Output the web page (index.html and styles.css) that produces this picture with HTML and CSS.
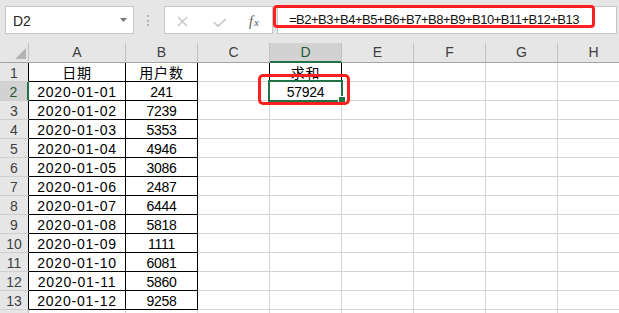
FILE: index.html
```html
<!DOCTYPE html>
<html lang="zh">
<head>
    <meta charset="UTF-8">
    <title>求和 - 工作表</title>
    <link rel="stylesheet" href="styles.css">
</head>
<body>

<!-- 名称框 + 编辑栏 -->
<div class="toolbar">
    <div class="namebox">
        <span>D2</span>
        <svg width="7" height="4" viewBox="0 0 7 4"><path d="M0 0h7L3.5 4z" fill="#767676"/></svg>
    </div>
    <div class="grip"><span></span><span></span><span></span></div>
    <div class="fxbox">
        <svg class="btn-x" width="11" height="11" viewBox="0 0 11 11"><path d="M1 1l9 9M10 1l-9 9" stroke="#c4c4c4" stroke-width="1.4" fill="none"/></svg>
        <svg class="btn-ok" width="14" height="9" viewBox="0 0 14 9"><path d="M1 4.5l4 3.5 8-7" stroke="#c4c4c4" stroke-width="1.6" fill="none"/></svg>
        <span class="fx"><i>f</i><i class="fx-x">x</i></span>
    </div>
    <div class="formula">=B2+B3+B4+B5+B6+B7+B8+B9+B10+B11+B12+B13</div>
</div>

<!-- 工作表 -->
<div class="sheet">
    <div class="hd corner"><svg width="11" height="11" viewBox="0 0 11 11"><path d="M11 0v11H0z" fill="#b5b5b5"/></svg></div>
    <div class="hd">A</div><div class="hd">B</div><div class="hd">C</div><div class="hd sel">D</div>
    <div class="hd">E</div><div class="hd">F</div><div class="hd">G</div><div class="hd">H</div>

    <div class="cell rh edge">1</div><div class="cell bk cjk">日期</div><div class="cell bk cjk">用户数</div><div class="cell bk-r"></div><div class="cell bk-r cjk">求和</div>
    <div class="cell"></div><div class="cell"></div><div class="cell"></div><div class="cell"></div>

    <div class="cell rh sel">2</div><div class="cell bk date">2020-01-01</div><div class="cell bk num">241</div><div class="cell"></div><div class="cell num active">57924</div>
    <div class="cell"></div><div class="cell"></div><div class="cell"></div><div class="cell"></div>

    <div class="cell rh edge">3</div><div class="cell bk date">2020-01-02</div><div class="cell bk num">7239</div><div class="cell"></div><div class="cell"></div>
    <div class="cell"></div><div class="cell"></div><div class="cell"></div><div class="cell"></div>

    <div class="cell rh edge">4</div><div class="cell bk date">2020-01-03</div><div class="cell bk num">5353</div><div class="cell"></div><div class="cell"></div>
    <div class="cell"></div><div class="cell"></div><div class="cell"></div><div class="cell"></div>

    <div class="cell rh edge">5</div><div class="cell bk date">2020-01-04</div><div class="cell bk num">4946</div><div class="cell"></div><div class="cell"></div>
    <div class="cell"></div><div class="cell"></div><div class="cell"></div><div class="cell"></div>

    <div class="cell rh edge">6</div><div class="cell bk date">2020-01-05</div><div class="cell bk num">3086</div><div class="cell"></div><div class="cell"></div>
    <div class="cell"></div><div class="cell"></div><div class="cell"></div><div class="cell"></div>

    <div class="cell rh edge">7</div><div class="cell bk date">2020-01-06</div><div class="cell bk num">2487</div><div class="cell"></div><div class="cell"></div>
    <div class="cell"></div><div class="cell"></div><div class="cell"></div><div class="cell"></div>

    <div class="cell rh edge">8</div><div class="cell bk date">2020-01-07</div><div class="cell bk num">6444</div><div class="cell"></div><div class="cell"></div>
    <div class="cell"></div><div class="cell"></div><div class="cell"></div><div class="cell"></div>

    <div class="cell rh edge">9</div><div class="cell bk date">2020-01-08</div><div class="cell bk num">5818</div><div class="cell"></div><div class="cell"></div>
    <div class="cell"></div><div class="cell"></div><div class="cell"></div><div class="cell"></div>

    <div class="cell rh edge">10</div><div class="cell bk date">2020-01-09</div><div class="cell bk num">1111</div><div class="cell"></div><div class="cell"></div>
    <div class="cell"></div><div class="cell"></div><div class="cell"></div><div class="cell"></div>

    <div class="cell rh edge">11</div><div class="cell bk date">2020-01-10</div><div class="cell bk num">6081</div><div class="cell"></div><div class="cell"></div>
    <div class="cell"></div><div class="cell"></div><div class="cell"></div><div class="cell"></div>

    <div class="cell rh edge">12</div><div class="cell bk date">2020-01-11</div><div class="cell bk num">5860</div><div class="cell"></div><div class="cell"></div>
    <div class="cell"></div><div class="cell"></div><div class="cell"></div><div class="cell"></div>

    <div class="cell rh edge">13</div><div class="cell bk date">2020-01-12</div><div class="cell bk num">9258</div><div class="cell"></div><div class="cell"></div>
    <div class="cell"></div><div class="cell"></div><div class="cell"></div><div class="cell"></div>

    <div class="cell rh"></div><div class="cell"></div><div class="cell"></div><div class="cell"></div><div class="cell"></div>
    <div class="cell"></div><div class="cell"></div><div class="cell"></div><div class="cell"></div>
</div>

<!-- 红色标注框 -->
<div class="mark mark-formula"></div>
<div class="mark mark-cell"></div>

</body>
</html>
```

FILE: styles.css
```css
/* 基础 */
* {
    margin: 0;
    padding: 0;
    box-sizing: border-box;
}

body {
    position: relative;
    width: 619px;
    height: 313px;
    overflow: hidden;
    background: #fff;
    font-family: "Liberation Sans", "Noto Sans CJK SC", sans-serif;
    color: #000;
}

/* 编辑栏 */
.toolbar {
    display: flex;
    align-items: flex-start;
    height: 43px;
    padding-top: 6px;
    background: #e6e6e6;
}

.namebox {
    display: flex;
    align-items: center;
    justify-content: space-between;
    width: 129px;
    height: 28px;
    margin-left: 5px;
    padding: 2px 6px 0 7px;
    background: #fff;
    border: 1px solid #c6c6c6;
    font-size: 14px;
    color: #222;
}

.namebox svg {
    margin-top: -2px;
}

.grip {
    display: flex;
    flex-direction: column;
    gap: 2.5px;
    width: 2px;
    margin: 9px 15px 0 13px;
}

.grip span {
    width: 2px;
    height: 2px;
    background: #b2b2b2;
}

.fxbox {
    display: flex;
    align-items: center;
    width: 109px;
    height: 28px;
    padding: 2px 0 0 12px;
    background: #fff;
    border: 1px solid #c6c6c6;
}

.btn-x {
    margin-top: 1px;
}

.btn-ok {
    margin: 3px 0 0 25px;
}

.fx {
    margin: 1px 0 0 22px;
    font-family: "Liberation Serif", serif;
    font-size: 14px;
    color: #5a5a5a;
}

.fx-x {
    font-size: 11px;
    margin-left: 1px;
}

.formula {
    width: 340px;
    height: 28px;
    margin-left: 4px;
    padding-left: 11px;
    background: #fff;
    border: 1px solid #c6c6c6;
    font-size: 13px;
    letter-spacing: -0.5px;
    line-height: 26px;
    color: #111;
    white-space: nowrap;
}

/* 工作表网格 */
.sheet {
    display: grid;
    grid-template-columns: 29px 97px repeat(7, 72px);
    grid-template-rows: 20px repeat(14, 19px);
    height: 270px;
    overflow: hidden;
}

.hd {
    background: #e6e6e6;
    border-right: 1px solid #c2c2c2;
    border-bottom: 1px solid #a3a3a3;
    font-size: 14px;
    line-height: 19px;
    text-align: center;
    color: #404040;
}

.hd.sel {
    background: #d2d2d2;
    border-bottom: 2px solid #217346;
    color: #1b5a35;
}

.corner {
    display: flex;
    align-items: flex-end;
    justify-content: flex-end;
    padding: 0 2px 3px 0;
}

.cell {
    border-right: 1px solid #d4d4d4;
    border-bottom: 1px solid #d4d4d4;
    padding-top: 2px;
    font-size: 14px;
    line-height: 16px;
    text-align: center;
    white-space: nowrap;
}

.rh {
    background: #e6e6e6;
    border-right-color: #bdbdbd;
    border-bottom-color: #cfcfcf;
    color: #404040;
}

.rh.edge {
    border-right-color: #000;
}

.rh.sel {
    background: #d2d2d2;
    border-right: 2px solid #217346;
    color: #1b5a35;
}

.bk {
    border-color: #000;
}

.bk-r {
    border-right-color: #000;
}

.date {
    letter-spacing: 0.8px;
}

.cjk {
    letter-spacing: 0.8px;
}

.num {
    letter-spacing: -0.3px;
}

/* 当前选中单元格 */
.active {
    position: relative;
}

.active::before {
    content: "";
    position: absolute;
    top: -2px;
    left: -2px;
    right: -2px;
    bottom: -2px;
    border: 2px solid #217346;
}

.active::after {
    content: "";
    position: absolute;
    right: -4px;
    bottom: -3px;
    width: 6px;
    height: 6px;
    background: #217346;
    border: 1px solid #fff;
    box-sizing: content-box;
    margin: -1px;
}

/* 红色标注 */
.mark {
    position: absolute;
    border: 3px solid #ff1f1f;
    border-radius: 4px;
    pointer-events: none;
}

.mark-formula {
    left: 273px;
    top: 5px;
    width: 322px;
    height: 23px;
}

.mark-cell {
    left: 258px;
    top: 74px;
    width: 92px;
    height: 31px;
    border-radius: 5px;
}
```
